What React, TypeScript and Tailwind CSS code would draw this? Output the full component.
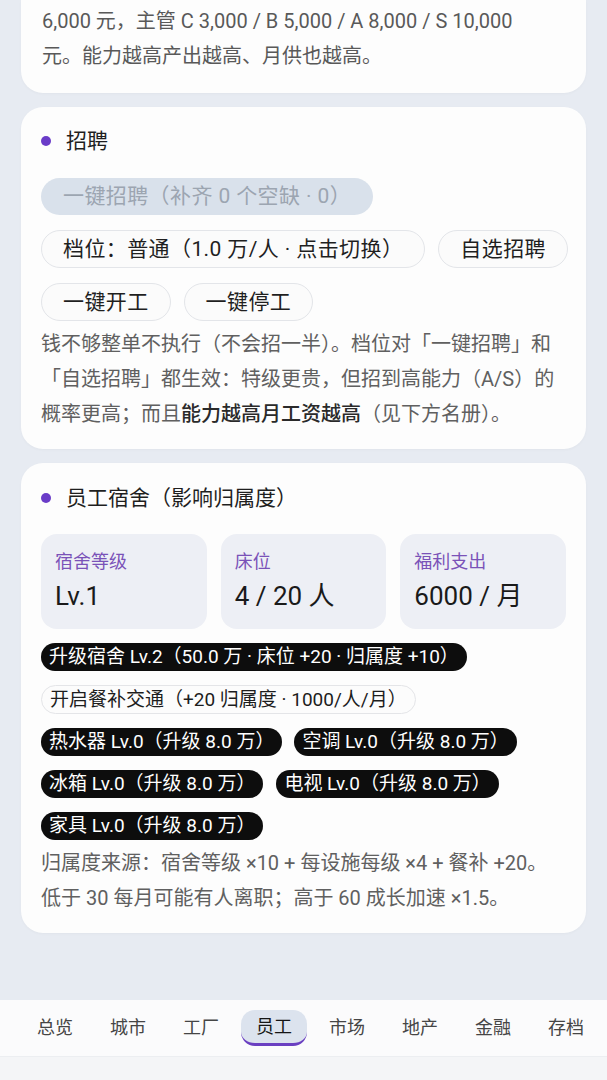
import React from "react";

const font = { fontFamily: 'Roboto, "Noto Sans CJK SC", "Noto Sans", sans-serif' };

function Title({ children }: { children: React.ReactNode }) {
  return (
    <div className="flex items-center gap-[15px] h-[28px]">
      <span className="w-[10px] h-[10px] rounded-full bg-[#6a3cc8]" />
      <span className="text-[21px] leading-[28px] text-[#1f1f1f]">{children}</span>
    </div>
  );
}

function Btn({ children }: { children: React.ReactNode }) {
  return (
    <button className="h-[38px] px-[21px] rounded-full border border-[#e3e5e9] bg-[#fbfbfb] text-[21px] leading-[36px] tracking-[0.4px] text-[#1f1f1f] whitespace-nowrap">
      {children}
    </button>
  );
}

function Pill({ children, dark = true }: { children: React.ReactNode; dark?: boolean }) {
  return dark ? (
    <span className="h-[28px] px-[8px] rounded-full bg-[#0d0d0d] text-white text-[19px] leading-[28px] whitespace-nowrap">
      {children}
    </span>
  ) : (
    <span className="h-[29px] px-[8px] rounded-full border border-[#e4e5e8] bg-[#fcfcfc] text-[#1d1d1d] text-[19px] leading-[27px] whitespace-nowrap">
      {children}
    </span>
  );
}

function Stat({ label, value }: { label: string; value: string }) {
  return (
    <div className="h-[95px] rounded-[16px] bg-[#edeff5] px-[14px] pt-[16px]">
      <div className="text-[18px] leading-[24px] text-[#7a52b8]">{label}</div>
      <div className="text-[26px] leading-[34px] text-[#1a1a1a] mt-[5px]">{value}</div>
    </div>
  );
}

const tabs = ["总览", "城市", "工厂", "员工", "市场", "地产", "金融", "存档"];

export default function App() {
  return (
    <div className="h-[1080px] overflow-hidden flex flex-col bg-[#e7ebf2]" style={font}>
      <div className="px-[21px] flex flex-col gap-[14px]">
        {/* 上一张卡片（被截断） */}
        <div className="rounded-b-[22px] bg-[#fdfdfd] px-[21px] pt-[4px] pb-[19px] text-[20px] leading-[35px] text-[#595959] shadow-[0_1px_3px_rgba(0,0,0,0.03)]">
          <div className="whitespace-nowrap">6,000 元，主管 C 3,000 / B 5,000 / A 8,000 / S 10,000</div>
          <div>元。能力越高产出越高、月供也越高。</div>
        </div>

        {/* 招聘 */}
        <div className="rounded-[22px] bg-[#fdfdfd] px-[20px] pt-[20px] pb-[17px] shadow-[0_1px_3px_rgba(0,0,0,0.03)]">
          <Title>招聘</Title>
          <div className="mt-[23px] flex flex-col gap-[15px]">
            <div className="flex">
              <button className="h-[37px] px-[22px] rounded-full bg-[#d9e1eb] text-[21px] leading-[37px] tracking-[0.4px] text-[#9ca5b1] whitespace-nowrap">
                一键招聘（补齐 0 个空缺 · 0）
              </button>
            </div>
            <div className="flex gap-[13px]">
              <Btn>档位：普通（1.0 万/人 · 点击切换）</Btn>
              <Btn>自选招聘</Btn>
            </div>
            <div className="flex gap-[13px]">
              <Btn>一键开工</Btn>
              <Btn>一键停工</Btn>
            </div>
          </div>
          <p className="mt-[6px] text-[20px] leading-[35px] text-[#606060]">
            钱不够整单不执行（不会招一半）。档位对「一键招聘」和「自选招聘」都生效：特级更贵，但招到高能力（A/S）的概率更高；而且
            <span className="text-[#2a2a2a] font-medium">能力越高月工资越高</span>
            （见下方名册）。
          </p>
        </div>

        {/* 员工宿舍 */}
        <div className="rounded-[22px] bg-[#fdfdfd] px-[20px] pt-[21px] pb-[17px] shadow-[0_1px_3px_rgba(0,0,0,0.03)]">
          <Title>员工宿舍（影响归属度）</Title>
          <div className="mt-[22px] grid grid-cols-3 gap-[14px]">
            <Stat label="宿舍等级" value="Lv.1" />
            <Stat label="床位" value="4 / 20 人" />
            <Stat label="福利支出" value="6000 / 月" />
          </div>
          <div className="mt-[14px] flex flex-col gap-[14px]">
            <div className="flex">
              <Pill>升级宿舍 Lv.2（50.0 万 · 床位 +20 · 归属度 +10）</Pill>
            </div>
            <div className="flex">
              <Pill dark={false}>开启餐补交通（+20 归属度 · 1000/人/月）</Pill>
            </div>
            <div className="flex gap-[12px]">
              <Pill>热水器 Lv.0（升级 8.0 万）</Pill>
              <Pill>空调 Lv.0（升级 8.0 万）</Pill>
            </div>
            <div className="flex gap-[13px]">
              <Pill>冰箱 Lv.0（升级 8.0 万）</Pill>
              <Pill>电视 Lv.0（升级 8.0 万）</Pill>
            </div>
            <div className="flex">
              <Pill>家具 Lv.0（升级 8.0 万）</Pill>
            </div>
          </div>
          <p className="mt-[6px] text-[20px] leading-[35px] text-[#606060]">
            归属度来源：宿舍等级 ×10 + 每设施每级 ×4 + 餐补 +20。低于 30 每月可能有人离职；高于 60 成长加速 ×1.5。
          </p>
        </div>
      </div>

      <div className="flex-1" />

      {/* 底部导航 */}
      <nav className="h-[56px] bg-[#fbfbfc] flex items-center gap-[7px] px-[22px] overflow-hidden">
        {tabs.map((t) => (
          <div
            key={t}
            className={
              t === "员工"
                ? "shrink-0 h-[36px] px-[15px] rounded-[14px] bg-[#dce3ee] border-b-[3px] border-[#6a3fc1] text-[18px] leading-[34px] text-[#151515]"
                : "shrink-0 h-[36px] px-[15px] text-[18px] leading-[36px] text-[#454545]"
            }
          >
            {t}
          </div>
        ))}
      </nav>
      <div className="h-[24px] bg-[#f4f5f7] border-t border-[#eceef1]" />
    </div>
  );
}
